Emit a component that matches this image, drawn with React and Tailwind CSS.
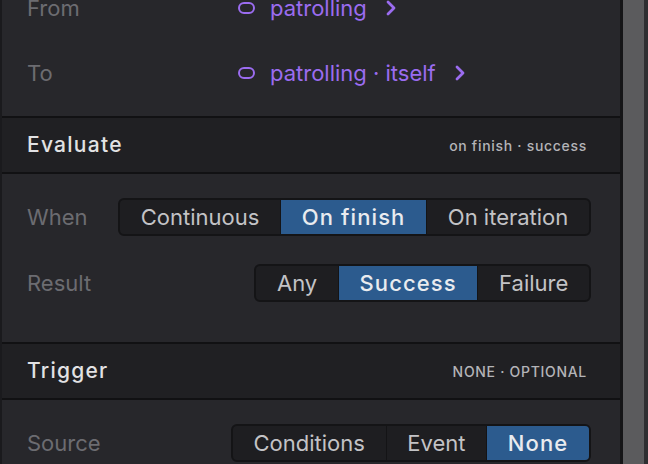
import React, { useState } from "react";

const FONT = { fontFamily: "Inter, 'Noto Sans', sans-serif" };

const StateIcon = () => (
  <span className="inline-block w-[17px] h-[12px] rounded-full border-2 border-[#9b6cf0]" />
);

const Chevron = () => (
  <svg width="12" height="16" viewBox="0 0 12 16" fill="none">
    <path
      d="M3 2 L9 8 L3 14"
      stroke="#9b6cf0"
      strokeWidth="2.8"
      strokeLinecap="round"
      strokeLinejoin="round"
    />
  </svg>
);

const LinkRow = ({ label, value }) => (
  <div className="flex items-center h-[38px]">
    <span className="w-[211px] text-[22px] text-[#6c6c71]">{label}</span>
    <StateIcon />
    <span className="ml-[15px] text-[22px] text-[#9b6cf0]">{value}</span>
    <span className="ml-[18px] flex items-center">
      <Chevron />
    </span>
  </div>
);

const Segmented = ({ options, value, onChange }) => (
  <div className="flex h-[38px] rounded-[6px] border-2 border-[#141416] bg-[#1e1e21] overflow-hidden">
    {options.map((opt, i) => {
      const active = opt === value;
      return (
        <button
          key={opt}
          onClick={() => onChange(opt)}
          className={`px-[20.7px] text-[22px] leading-none ${
            i > 0 ? "border-l border-[#141416]" : ""
          } ${
            active
              ? "bg-[#2c5b8e] text-[#e9ebef] font-medium tracking-[0.05em]"
              : "text-[#c3c3c6]"
          }`}
        >
          {opt}
        </button>
      );
    })}
  </div>
);

const FieldRow = ({ label, children }) => (
  <div className="flex items-center justify-between h-[38px]">
    <span className="text-[22px] text-[#6c6c71]">{label}</span>
    {children}
  </div>
);

const SectionHeader = ({ title, meta, upper }) => (
  <div className="flex items-center justify-between h-[58px] bg-[#202023] border-y-2 border-[#111113] pl-[25px] pr-[33px]">
    <span className="text-[21px] font-medium tracking-[0.06em] text-[#e2e2e4]">
      {title}
    </span>
    <span
      className={`text-[14px] font-medium tracking-[0.05em] text-[#b4b4b8] ${
        upper ? "uppercase" : ""
      }`}
    >
      {meta}
    </span>
  </div>
);

export default function App() {
  const [when, setWhen] = useState("On finish");
  const [result, setResult] = useState("Success");
  const [source, setSource] = useState("None");

  return (
    <div className="w-[648px] h-[464px] flex bg-[#1a1a1d] overflow-hidden" style={FONT}>
      <div className="ml-[2px] w-[618px] flex flex-col bg-[#27272b]">
        {/* transition endpoints */}
        <div className="-mt-[11px] flex flex-col gap-[27px] pl-[25px] pb-[24px]">
          <LinkRow label="From" value="patrolling" />
          <LinkRow label="To" value="patrolling · itself" />
        </div>

        <SectionHeader title="Evaluate" meta="on finish · success" />
        <div className="flex flex-col gap-[28px] pt-[24px] pb-[40px] pl-[25px] pr-[29px]">
          <FieldRow label="When">
            <Segmented
              options={["Continuous", "On finish", "On iteration"]}
              value={when}
              onChange={setWhen}
            />
          </FieldRow>
          <FieldRow label="Result">
            <Segmented
              options={["Any", "Success", "Failure"]}
              value={result}
              onChange={setResult}
            />
          </FieldRow>
        </div>

        <SectionHeader title="Trigger" meta="None · Optional" upper />
        <div className="flex flex-col pt-[24px] pl-[25px] pr-[29px]">
          <FieldRow label="Source">
            <Segmented
              options={["Conditions", "Event", "None"]}
              value={source}
              onChange={setSource}
            />
          </FieldRow>
        </div>
      </div>
      {/* scrollbar */}
      <div className="w-[3px] bg-[#151517]" />
      <div className="w-[21px] bg-[#5b5b5d]" />
      <div className="w-[4px] bg-[#2e2e31]" />
    </div>
  );
}
